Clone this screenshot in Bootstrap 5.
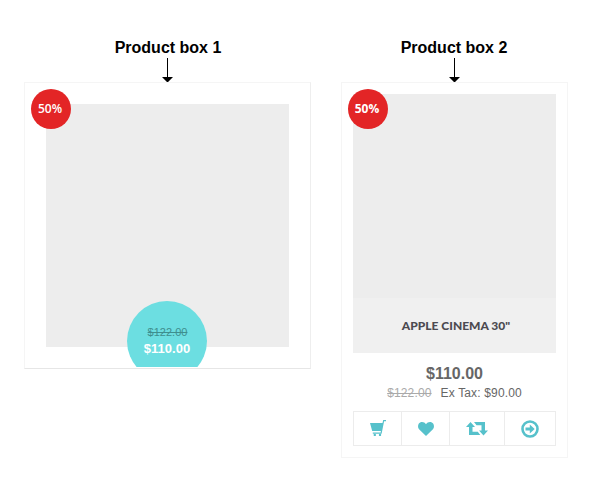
<!DOCTYPE html>
<html lang="en">
<head>
<meta charset="utf-8">
<meta name="viewport" content="width=device-width, initial-scale=1">
<title>Product boxes</title>
<link href="https://cdn.jsdelivr.net/npm/bootstrap@5.3.0/dist/css/bootstrap.min.css" rel="stylesheet">
<style>
body{font-family:"Liberation Sans",Arial,sans-serif;color:#666;background:#fff;font-size:12px}
.page{padding:38px 21px 0 24px;gap:30px}
.box-one{width:287px}
.box-two{width:227px}
.label-text{font-size:16px;line-height:20px;font-weight:700;color:#000;margin:0;height:20px}
.box-one .label-text{padding-left:1px}
.box-two .label-text{padding-right:1px}
.frame-one{height:287px;padding:21px;border:1px solid #f5f5f5;border-bottom-color:#e6e6e6;border-right-color:#eee}
.frame-two{height:376px;padding:11px;border:1px solid #f5f5f5}
.photo-one{height:243px;background:#ededed}
.photo-two{height:204px;background:#ededed}
.sale{left:6px;top:6px;width:40px;height:40px;padding-right:2px;background:#e32526;color:#fff;font:600 12px/40px "Open Sans",sans-serif}
.box-two .sale{font-weight:700}
.price-disc{width:80px;height:66px;left:102px;bottom:1px}
.price-disc-inner{width:80px;height:80px;background:#6cdee1;padding-top:23px}
.disc-old{font-size:11px;line-height:16px;color:#3f8e8e;padding-left:1px}
.disc-new{font-size:13px;line-height:18px;font-weight:700;color:#fff}
.name{height:55px;background:#f0f0f0;font:900 12px/55px Lato,sans-serif;color:#4c4a50;padding-left:3px}
.price{font-size:16px;line-height:20px;font-weight:700;color:#666;margin-top:11px}
.taxes{line-height:18px;gap:9px;letter-spacing:.15px}
.old{color:#aaa}
.actions{margin-top:9px;height:35px;border:1px solid #ececec}
.actions a{color:#56c1cb;border-right:1px solid #ececec}
.actions a:last-child{border-right:0}
.w-a{width:48px}.w-b{width:48px}.w-c{width:55px}.w-d{width:50px}
.w-c svg{margin-right:1px}
</style>
</head>
<body>
<main class="page d-flex align-items-start">
  <section class="box-one d-flex flex-column text-center">
    <h2 class="label-text">Product box 1</h2>
    <svg class="align-self-center" width="11" height="24" viewBox="0 0 11 24"><path d="M5 0h1v19h5L6 24H5L0 19h5z"/></svg>
    <div class="frame-one position-relative overflow-hidden">
      <div class="photo-one"></div>
      <span class="sale rounded-circle position-absolute">50%</span>
      <div class="price-disc position-absolute overflow-hidden">
        <div class="price-disc-inner rounded-circle d-flex flex-column">
          <s class="disc-old">$122.00</s>
          <span class="disc-new">$110.00</span>
        </div>
      </div>
    </div>
  </section>
  <section class="box-two d-flex flex-column text-center">
    <h2 class="label-text">Product box 2</h2>
    <svg class="align-self-center" width="11" height="24" viewBox="0 0 11 24"><path d="M5 0h1v19h5L6 24H5L0 19h5z"/></svg>
    <div class="frame-two position-relative">
      <div class="photo-two"></div>
      <span class="sale rounded-circle position-absolute">50%</span>
      <div class="name">APPLE CINEMA 30"</div>
      <div class="price">$110.00</div>
      <div class="taxes d-flex justify-content-center"><s class="old">$122.00</s><span>Ex Tax: $90.00</span></div>
      <nav class="actions d-flex">
        <a href="#" class="w-a d-flex align-items-center justify-content-center" aria-label="Add to cart"><svg width="16" height="17" viewBox="0 0 16 17" fill="currentColor"><path d="M0 3h12.500L13.200 0H16v1.200h-1.900L11.600 13.800H2.800v-1.200h7.900l.2-1.600H2.200z"/><circle cx="4.800" cy="14.900" r="1.200"/><circle cx="10" cy="14.900" r="1.200"/></svg></a>
        <a href="#" class="w-b d-flex align-items-center justify-content-center" aria-label="Add to wish list"><svg width="16" height="14" viewBox="0 0 16 14" fill="currentColor"><path d="M8 14 1.300 7.600C-.2 6.100-.3 3.500.7 1.700 2.500-.7 6.300-.4 8 2.200c1.700-2.600 5.500-2.900 7.300-.5 1 1.800.9 4.400-.6 5.900z"/></svg></a>
        <a href="#" class="w-c d-flex align-items-center justify-content-center" aria-label="Compare"><svg width="22" height="14" viewBox="0 0 22 14" fill="currentColor"><path d="M4.500 0 9 5H6.500v4.800h5.300l2.500 3.200H3V5H0zM8 0h11v8.500h3L17.500 13.500 13 8.500h2.500V3.200h-5z"/></svg></a>
        <a href="#" class="w-d d-flex align-items-center justify-content-center" aria-label="View details"><svg width="18" height="18" viewBox="0 0 18 18"><circle cx="9" cy="9" r="7.500" fill="none" stroke="currentColor" stroke-width="2.600"/><path fill="currentColor" d="M4.500 7.500h4.300V4.400L13.700 9l-4.900 4.600v-3.100H4.500z"/></svg></a>
      </nav>
    </div>
  </section>
</main>
<script src="https://cdn.jsdelivr.net/npm/bootstrap@5.3.0/dist/js/bootstrap.bundle.min.js"></script>
</body>
</html>
